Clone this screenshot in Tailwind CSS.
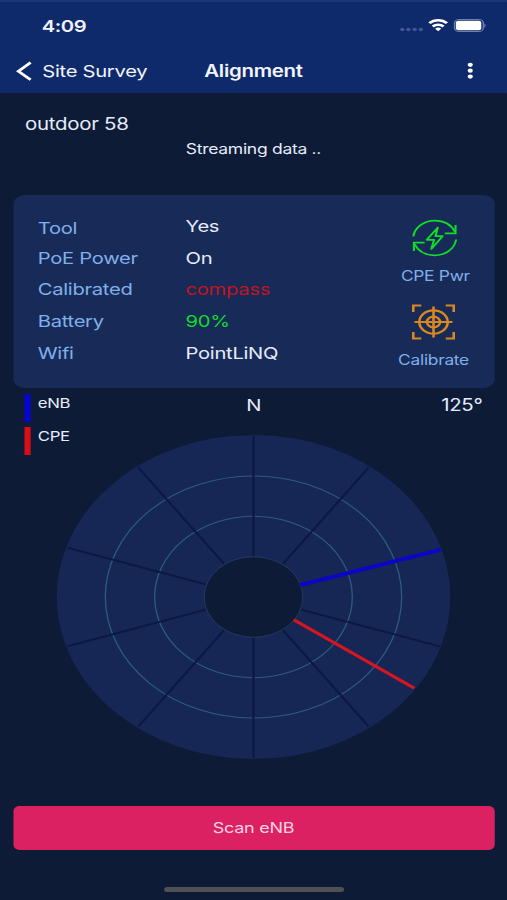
<!DOCTYPE html>
<html lang="en">
<head>
<meta charset="utf-8">
<title>Alignment</title>
<script src="https://cdn.jsdelivr.net/npm/@tailwindcss/browser@4"></script>
</head>
<body class="w-[507px] h-[900px] overflow-hidden bg-[#0d1b37]">
<!-- 414pt wide phone layout, widened to fill the window -->
<div class="w-[414px] h-[900px] origin-top-left scale-x-[1.2246] flex flex-col font-['Inter',sans-serif] tracking-[-0.015em] text-[#e6ecfa] bg-[#0d1b37] overflow-hidden whitespace-nowrap">
  <header class="h-[93px] shrink-0 bg-[#0f2a6a] border-t-2 border-[#1b3674] text-[#f1f4fd]">
    <div class="h-[47px] pl-[34px] pr-[17px] flex items-center justify-between">
      <span class="text-[16.5px] font-semibold tracking-[-0.02em] translate-y-px">4:09</span>
      <svg class="w-[72px] h-[16px] -mt-[2px]" viewBox="0 0 72 16" fill="none">
        <g fill="#405699"><circle cx="3.5" cy="12.500" r="1.8"/><circle cx="8.5" cy="12.500" r="1.8"/><circle cx="13.6" cy="12.500" r="1.8"/><circle cx="18.7" cy="12.500" r="1.8"/></g>
        <g stroke="#fff" stroke-width="2.5"><path d="M25.6 6.2a10.2 10.2 0 0 1 14.4 0"/><path d="M28.4 9.5a6.4 6.4 0 0 1 8.800 0"/></g>
        <path d="M32.8 14.200l-2.500-2.500a3.600 3.600 0 0 1 5 0z" fill="#fff"/>
        <rect x="46.200" y="2.500" width="23.500" height="12" rx="3.600" stroke="#6c7eb1" stroke-width="1.200"/>
        <rect x="47.300" y="3.800" width="20.700" height="9.400" rx="2" fill="#fff"/>
        <path d="M70.500 6.500c1.400.5 1.400 3.500 0 4z" fill="#6c7eb1"/>
      </svg>
    </div>
    <div class="h-[44px] pl-[13px] pr-[27px] flex items-center">
      <div class="flex flex-1 basis-0 items-center gap-[7.500px]">
        <svg class="w-[14px] h-[22px]" viewBox="0 0 14 22" fill="none" stroke="#fff" stroke-width="2.500"><path d="M12 2.500L2 11.200l10 8.600"/></svg>
        <span class="text-[16.500px]">Site Survey</span>
      </div>
      <h1 class="text-[16.700px] font-semibold translate-x-[7px] translate-y-px">Alignment</h1>
      <div class="flex flex-1 basis-0 justify-end">
        <svg class="w-[6px] h-[18px]" viewBox="0 0 6 18" fill="#fff"><circle cx="3" cy="2.800" r="2.100"/><circle cx="3" cy="8.700" r="2.100"/><circle cx="3" cy="14.600" r="2.100"/></svg>
      </div>
    </div>
  </header>

  <section class="h-[102px] shrink-0 pt-[19px]">
    <p class="pl-[20.500px] text-[16.700px] leading-[24px]">outdoor 58</p>
    <p class="pt-[4px] text-center text-[14.300px] leading-[18px]">Streaming data ..</p>
  </section>

  <section class="mx-[10.500px] h-[193px] shrink-0 rounded-[9px] bg-[#182a57] flex pl-[20.300px] pr-[18.500px]">
    <dl class="grid grid-cols-[120.700px_1fr] auto-rows-[31.700px] content-start pt-[15px] flex-1 text-[16.500px] leading-[32px]">
      <dt class="text-[#7fb0ea] pt-[2px]">Tool</dt><dd>Yes</dd>
      <dt class="text-[#7fb0ea]">PoE Power</dt><dd>On</dd>
      <dt class="text-[#7fb0ea]">Calibrated</dt><dd class="text-[#c2141f]">compass</dd>
      <dt class="text-[#7fb0ea]">Battery</dt><dd class="text-[#0fdc2c]">90%</dd>
      <dt class="text-[#7fb0ea]">Wifi</dt><dd>PointLiNQ</dd>
    </dl>
    <div class="w-[60px] pt-[24px] flex flex-col items-center text-[14.200px] leading-[18px] text-[#7fb0ea]">
      <svg class="w-[38px] h-[38px]" viewBox="0 0 38 38" fill="none" stroke="#10dc2c" stroke-width="1.700">
        <path d="M1.500 17.500C2.800 8.300 10 1.700 19 1.700c7.500 0 13.500 4 16.500 11.300"/>
        <path d="M36 6v8.300h-8.800"/>
        <path d="M36.500 20.500C35.200 29.700 28 36.300 19 36.300c-7.500 0-13.500-4-16.500-11.300"/>
        <path d="M2 32v-8.300h8.800"/>
        <path d="M21.500 8.500L12.500 20.800h6l-2.300 9.200 9.200-12.800h-5.800z" stroke-linejoin="round"/>
      </svg>
      <span class="mt-[10px] translate-x-[0.500px]">CPE Pwr</span>
      <svg class="w-[36px] h-[36px] mt-[18.500px] mr-[3px]" viewBox="0 0 36 36" fill="none" stroke="#d9881f" stroke-width="2.100">
        <path d="M1.500 8V1.500H8M28 1.500h6.500V8M34.500 28v6.500H28M8 34.500H1.500V28"/>
        <circle cx="18" cy="18" r="11.600"/><circle cx="18" cy="18" r="5.400"/>
        <path d="M18 2.500v31M2.500 18h31"/>
      </svg>
      <span class="mt-[11px] -translate-x-[1px]">Calibrate</span>
    </div>
  </section>

  <section class="grid grid-cols-[1fr_auto_1fr] h-[48px] shrink-0 pl-[20.300px] pr-[20px] pt-[5px]">
    <div class="flex flex-col text-[13.700px] leading-[20px]">
      <div class="flex gap-[6px] h-[33px]"><i class="w-[4.500px] h-[28px] mt-[1px] bg-[#0505d0]"></i><span>eNB</span></div>
      <div class="flex gap-[6px] h-[33px] shrink-0"><i class="w-[4.500px] h-[28px] mt-[1px] bg-[#d80f16]"></i><span>CPE</span></div>
    </div>
    <span class="text-[16.500px] leading-[24px]">N</span>
    <span class="text-[16.700px] leading-[24px] justify-self-end">125°</span>
  </section>

  <svg class="w-[322px] h-[324px] shrink-0 mx-auto -mt-px" viewBox="-161 -162 322 324" fill="none">
    <ellipse rx="160.700" ry="162" fill="#162655"/>
    <g stroke="#2b5b80" stroke-width="1.100">
      <circle r="121"/><circle r="80.700"/>
    </g>
    <circle r="40.300" fill="#0d1b37" stroke="#273d61" stroke-width=".8"/>
    <g stroke="#0c1842" stroke-width="1.800">
      <path d="M0-41V-161"/><path d="M0-41V-160" transform="rotate(36)"/>
      <path d="M0-41V-160" transform="rotate(108)"/><path d="M0-41V-160" transform="rotate(144)"/>
      <path d="M0-41V-161" transform="rotate(180)"/><path d="M0-41V-160" transform="rotate(216)"/>
      <path d="M0-41V-160" transform="rotate(252)"/><path d="M0-41V-160" transform="rotate(288)"/>
      <path d="M0-41V-160" transform="rotate(324)"/>
    </g>
    <path d="M0-40V-160" stroke="#0a06c4" stroke-width="4" transform="rotate(72.800)"/>
    <path d="M0-40V-160" stroke="#d3161f" stroke-width="3" transform="rotate(124.800)"/>
  </svg>

  <button class="mx-[10.500px] mt-[47px] h-[44px] shrink-0 rounded-[5px] bg-[#db2161] text-[#fbd3e2] text-[14.700px] tracking-[-0.015em] pt-px">Scan eNB</button>
  <div class="mx-auto mt-[37px] h-[5px] w-[147px] shrink-0 rounded-full bg-[#505152]"></div>
</div>
</body>
</html>
